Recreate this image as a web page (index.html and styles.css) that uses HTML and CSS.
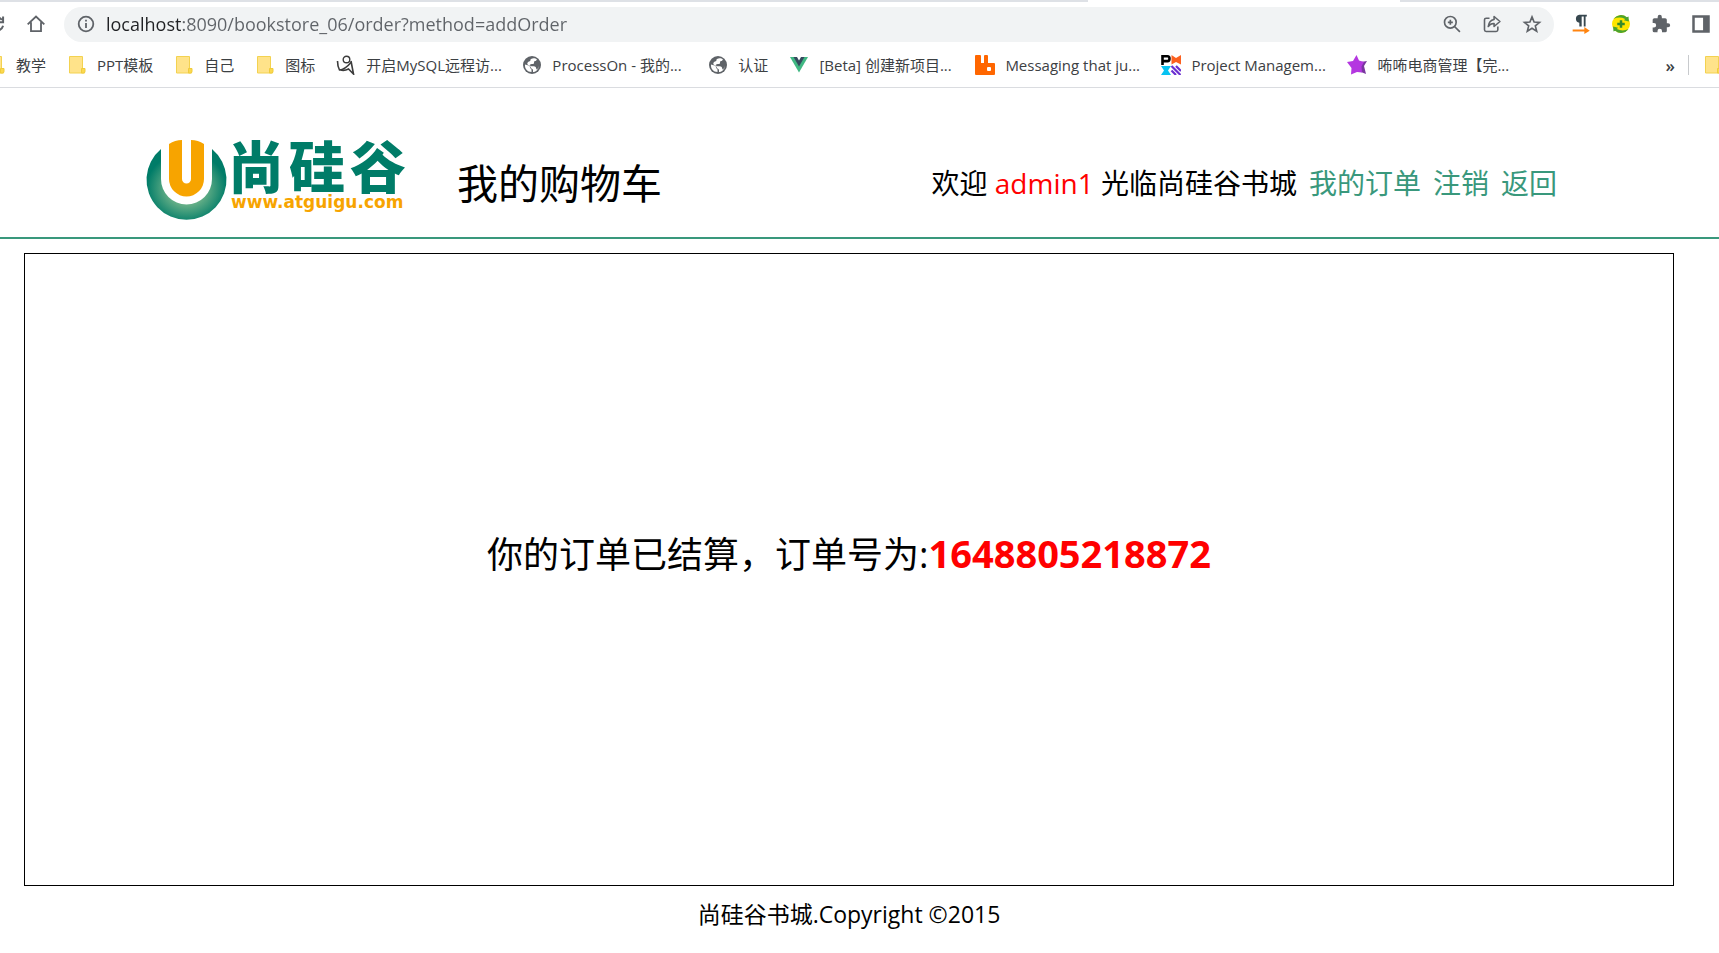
FILE: index.html
```html
<!DOCTYPE html>
<html lang="zh-CN">
<head>
    <meta charset="UTF-8">
    <title>我的购物车</title>
    <link rel="stylesheet" href="styles.css">
</head>
<body>
    <svg class="symbols" aria-hidden="true">
        <symbol id="folder" viewBox="0 0 20 20">
            <path d="M2.5 1.5h13v13h2v3.500h-15z" fill="#ffe38a" stroke="#f3d250" stroke-linejoin="round"/>
            <path d="M14.500 18v-4.500h3.500v3q0 1.500-1.500 1.500z" fill="#fbd94f" stroke="#f0cb3c"/>
        </symbol>
        <symbol id="globe" viewBox="0 0 20 20">
            <circle cx="10" cy="10" r="9" fill="#5f6368"/>
            <path d="M3 9.500l3.500 1c1 .3 1.500 1 1.500 2 0 1.200 1.500 1 1.500 2.200v2.300c-4 0-7-3.200-6.500-7.500zM9 4c2-1.300 4.500-1 6 .6l-1 1.200c-.4.500-1.400.2-1.800.7-.6.700.3 1.300-.3 2-.8 1-3.400.2-3.900 1.300-.3.900.5 1.400 1.500 1.400 1.800 0 3.600-.3 4.300 1.100.5 1.100.4 2 1.200 2.100 1.200-1.200 2-2.700 2-4.400 0 4.300-3 7-6 7v-1.800c0-1.500-2-1.200-2.300-2.700-.2-1.200-.8-1.800-2-2.200-1.300-.5-1.700-1.300-1.200-2.500.6-1.500 2.300-1 2.800-2 .4-.9-.2-1.200.7-1.800z" fill="#fff"/>
        </symbol>
    </svg>

    <div class="browser">
        <div class="tabs"><span></span></div>
        <div class="toolbar">
            <button class="tool reload" aria-label="重新加载">
                <svg viewBox="0 0 24 24"><path d="M19 7a8 8 0 1 0 1.500 7M20.500 3v7h-7" fill="none" stroke="#5f6368" stroke-width="2.400"/></svg>
            </button>
            <button class="tool" aria-label="主页">
                <svg viewBox="0 0 24 24"><path d="M2 12.500L12 3l10 9.500M6 10v10.500h12V10" fill="none" stroke="#5f6368" stroke-width="2.200"/></svg>
            </button>
            <div class="address">
                <svg class="info" viewBox="0 0 20 20"><circle cx="10" cy="10" r="7.300" fill="none" stroke="#5f6368" stroke-width="1.800"/><path d="M10 9v5M10 5.700v1.800" stroke="#5f6368" stroke-width="1.800"/></svg>
                <input class="url" type="text" aria-label="地址" value="localhost:8090/bookstore_06/order?method=addOrder">
                <button class="tool" aria-label="缩放">
                    <svg viewBox="0 0 24 24"><g fill="none" stroke="#5f6368" stroke-width="2"><circle cx="10" cy="10" r="7"/><path d="M15 15l6.500 6.500M7 10h6M10 7v6"/></g></svg>
                </button>
                <button class="tool" aria-label="分享">
                    <svg viewBox="0 0 24 24"><g fill="none" stroke="#5f6368" stroke-width="1.900" stroke-linejoin="round"><path d="M9 5H5q-2 0-2 2v12q0 2 2 2h12q2 0 2-2v-4"/><path d="M14.500 3l7 6-7 6v-3.500q-4.500-.2-7 3.500.8-7.500 7-8.500z"/></g></svg>
                </button>
                <button class="tool" aria-label="收藏">
                    <svg viewBox="0 0 24 24"><path d="M12 3.500l2.500 6.100 6.500.5-5 4.200 1.600 6.400-5.600-3.500-5.600 3.500L8 14.300l-5-4.200 6.500-.5z" fill="none" stroke="#5f6368" stroke-width="2"/></svg>
                </button>
            </div>
            <button class="tool" aria-label="段落">
                <svg viewBox="0 0 24 24"><path d="M10 10.500a4.800 4.800 0 0 1 0-9.500h9v2h-1.500v12h-2.200V3h-2.500v12H10z" fill="#37474f"/><path d="M2 18.500h14v-3l6.500 4.500-6.500 4v-3H2z" fill="#ff8410"/></svg>
            </button>
            <button class="tool" aria-label="安全">
                <svg viewBox="0 0 24 24"><circle cx="12" cy="12" r="10.800" fill="#ffe500"/><path d="M3 6a10.800 10.800 0 0 1 16-2l2-1 .5 6-6-1.500L17 6Q10 2.500 3 6zM21 18a10.800 10.800 0 0 1-16 2l-2 1-.5-6 6 1.500L7 18q7 3.500 14 0z" fill="#4ba32f"/><path d="M12 7.500v9M7.500 12h9" stroke="#36892c" stroke-width="3"/></svg>
            </button>
            <button class="tool" aria-label="扩展程序">
                <svg viewBox="0 0 24 24"><path d="M20.500 11H19V7a2 2 0 0 0-2-2h-4V3.500a2.500 2.500 0 0 0-5 0V5H4a2 2 0 0 0-2 2v3.800h1.500a2.700 2.700 0 0 1 0 5.400H2V20a2 2 0 0 0 2 2h3.800v-1.500a2.700 2.700 0 0 1 5.400 0V22H17a2 2 0 0 0 2-2v-4h1.500a2.500 2.500 0 0 0 0-5z" fill="#5f6368"/></svg>
            </button>
            <button class="tool" aria-label="侧边栏">
                <svg viewBox="0 0 24 24"><path d="M1.500 1.500h21v21h-21zM4.500 4.500v15h10v-15z" fill="#5f6368" fill-rule="evenodd"/></svg>
            </button>
        </div>
        <nav class="bookmarks">
            <a href="#"><svg><use href="#folder"/></svg>教学</a>
            <a href="#"><svg><use href="#folder"/></svg>PPT模板</a>
            <a href="#"><svg><use href="#folder"/></svg>自己</a>
            <a href="#"><svg><use href="#folder"/></svg>图标</a>
            <a href="#" class="long"><svg viewBox="0 0 20 20"><g fill="none" stroke="#3c3c3c"><circle cx="10.500" cy="4.500" r="3.300" stroke-width="1.400"/><path d="M1.500 6q0 5 2 9 5 0 12-8" stroke-width="1.600"/><path d="M15 6l2.500 13-5-5q-4 2-8 1" stroke-width="1.600"/></g></svg>开启MySQL远程访...</a>
            <a href="#" class="long"><svg><use href="#globe"/></svg>ProcessOn - 我的...</a>
            <a href="#"><svg><use href="#globe"/></svg>认证</a>
            <a href="#" class="long"><svg viewBox="0 0 20 20"><path d="M1 2h18l-9 15.500z" fill="#41b883"/><path d="M4.500 2h11L10 11.500z" fill="#35495e"/><path d="M8 2h4l-2 3.500z" fill="#fff"/></svg>[Beta] 创建新项目...</a>
            <a href="#" class="long"><svg viewBox="0 0 20 20"><path d="M1 0h4q1 0 1 1v7h3V1q0-1 1-1h2q1 0 1 1v7h6q1 0 1 1v10q0 1-1 1H1q-1 0-1-1V1q0-1 1-1z" fill="#f60"/><rect x="12" y="12" width="4" height="4" rx="1" fill="#fff"/></svg>Messaging that ju...</a>
            <a href="#" class="long"><svg viewBox="0 0 20 20"><path d="M1.500 10V1.300h5q2 0 2 2.400t-2 2.400h-5" fill="none" stroke="#000" stroke-width="2.600"/><path d="M10.500 0l4.500 3 5-3v9.500L15 7l-4.500 2.500z" fill="#fc601f"/><path d="M0 11h10l-3 4.500 3 4.500H0l3-4.500z" fill="#07c3f2"/><path d="M10.500 11l9 9M15 11l5 5M10.500 15.500l4.500 4.500" stroke="#6b2fd0" stroke-width="2.200"/></svg>Project Managem...</a>
            <a href="#" class="long"><svg viewBox="0 0 20 20"><path d="M14 7l6-1-3 5 2 8-5-2z" fill="#7a36a0"/><path d="M9.500 0l2.500 5.500 5 1.500-2.500 4.500.5 6-5-.5-6 2.500.5-6.500L0 7l6-1z" fill="#b437e0"/></svg>咘咘电商管理【完...</a>
            <button class="more" aria-label="更多书签">»</button>
            <a href="#" class="other" aria-label="其他书签"><svg><use href="#folder"/></svg></a>
        </nav>
    </div>

    <header class="header">
        <svg class="logo" viewBox="0 0 264 84" role="img" aria-label="尚硅谷 www.atguigu.com">
            <defs>
                <radialGradient id="ring" cx="0.500" cy="0.550" r="0.500">
                    <stop offset="0.500" stop-color="#62ad86"/>
                    <stop offset="1" stop-color="#007c68"/>
                </radialGradient>
            </defs>
            <path d="M15 12A40 40 0 1 0 66 12V42a25 25 0 0 1-51 0z" fill="url(#ring)"/>
            <path d="M23 7Q29 3 36 3v39a4 4 0 0 0 9 0V3q7 0 13 4v35a17.500 17.500 0 0 1-35 0z" fill="#f7a400"/>
            <text class="logo-name" x="82 143 204" y="51">尚硅谷</text>
            <text class="logo-site" x="85" y="71">www.atguigu.com</text>
        </svg>
        <h1>我的购物车</h1>
        <div class="welcome">
            <span>欢迎 <span class="user">admin1</span> 光临尚硅谷书城</span>
            <a href="#">我的订单</a>
            <a href="#">注销</a>
            <a href="#">返回</a>
        </div>
    </header>

    <main class="main">
        <p>你的订单已结算，订单号为:<b>1648805218872</b></p>
    </main>

    <footer class="footer">尚硅谷书城.Copyright ©2015</footer>
</body>
</html>
```
FILE: styles.css
```css
* {
    box-sizing: border-box;
}
body {
    margin: 0;
    min-height: 100vh;
    display: flex;
    flex-direction: column;
    background: #fff;
    color: #000;
    font-family: "Open Sans", "Noto Sans CJK SC", sans-serif;
    overflow-x: hidden;
}
a {
    text-decoration: none;
}
button {
    padding: 0;
    border: 0;
    background: none;
}
svg {
    display: block;
    flex: none;
}
.symbols {
    position: absolute;
    width: 0;
    height: 0;
}

/* browser bar */
.browser {
    height: 88px;
    border-bottom: 1px solid #dadce0;
    overflow: hidden;
}
.tabs {
    height: 2px;
    padding-left: 1088px;
    background: #dee1e6;
}
.tabs span {
    display: block;
    width: 312px;
    height: 2px;
    background: #fff;
}
.toolbar {
    display: flex;
    align-items: center;
    gap: 20px;
    height: 44px;
    padding-right: 8px;
}
.tool {
    flex: none;
    width: 20px;
    height: 20px;
}
.tool svg {
    width: 20px;
    height: 20px;
}
.reload {
    margin-left: -14px;
}
.address {
    flex: 1;
    display: flex;
    align-items: center;
    gap: 20px;
    height: 35px;
    margin-left: -2px;
    margin-right: -3px;
    padding: 0 12px;
    border-radius: 18px;
    background: #f1f3f4;
}
.info {
    width: 20px;
    height: 20px;
}
.url {
    flex: 1;
    margin-left: -10px;
    padding: 0;
    border: 0;
    outline: none;
    font: 18px "Open Sans", sans-serif;
    /* host is dark, the rest of the address is grey */
    color: transparent;
    background: linear-gradient(to right, #202124 77px, #5f6368 77px);
    -webkit-background-clip: text;
    background-clip: text;
}
.bookmarks {
    display: flex;
    align-items: center;
    gap: 21px;
    height: 38px;
    margin-left: -14px;
    margin-right: -4px;
    font-size: 15px;
    line-height: 20px;
    white-space: nowrap;
}
.bookmarks a {
    flex: none;
    display: flex;
    align-items: center;
    gap: 10px;
    color: #3c4043;
}
.bookmarks svg {
    width: 20px;
    height: 20px;
}
.bookmarks .long {
    width: 165px;
}
.more {
    margin-left: auto;
    color: #3c4043;
    font: 600 17px "Open Sans", sans-serif;
}
.bookmarks .other {
    margin-left: -8px;
    padding-left: 14px;
    border-left: 1px solid #c8cacd;
}

/* page */
.header {
    display: flex;
    align-items: center;
    height: 151px;
    padding: 32px 162px 0 146px;
    border-bottom: 2px solid #39987c;
}
.logo {
    width: 264px;
    height: 84px;
    overflow: visible;
}
.logo-name {
    font: 900 56px "Noto Sans CJK SC", sans-serif;
    fill: #007c68;
}
.logo-site {
    font: bold 17px "DejaVu Sans", sans-serif;
    fill: #f7a400;
}
h1 {
    margin: 0 0 0 47px;
    padding-top: 8px;
    font-size: 41px;
    font-weight: normal;
    line-height: 56px;
}
.welcome {
    display: flex;
    gap: 12px;
    margin-left: auto;
    padding-top: 8px;
    font-size: 28px;
    line-height: 40px;
}
.welcome a {
    color: #39987c;
}
.user,
.main b {
    color: #f00;
}
.main {
    flex: 1;
    display: flex;
    align-items: center;
    justify-content: center;
    margin: 14px 45px 0 24px;
    border: 1px solid #000;
}
.main p {
    margin: 0;
    padding-bottom: 32px;
    font-size: 36px;
    line-height: 52px;
}
.main b {
    font-size: 38px;
}
.footer {
    height: 67px;
    padding: 12px 45px 0 24px;
    font-size: 23px;
    line-height: 32px;
    text-align: center;
}
```
